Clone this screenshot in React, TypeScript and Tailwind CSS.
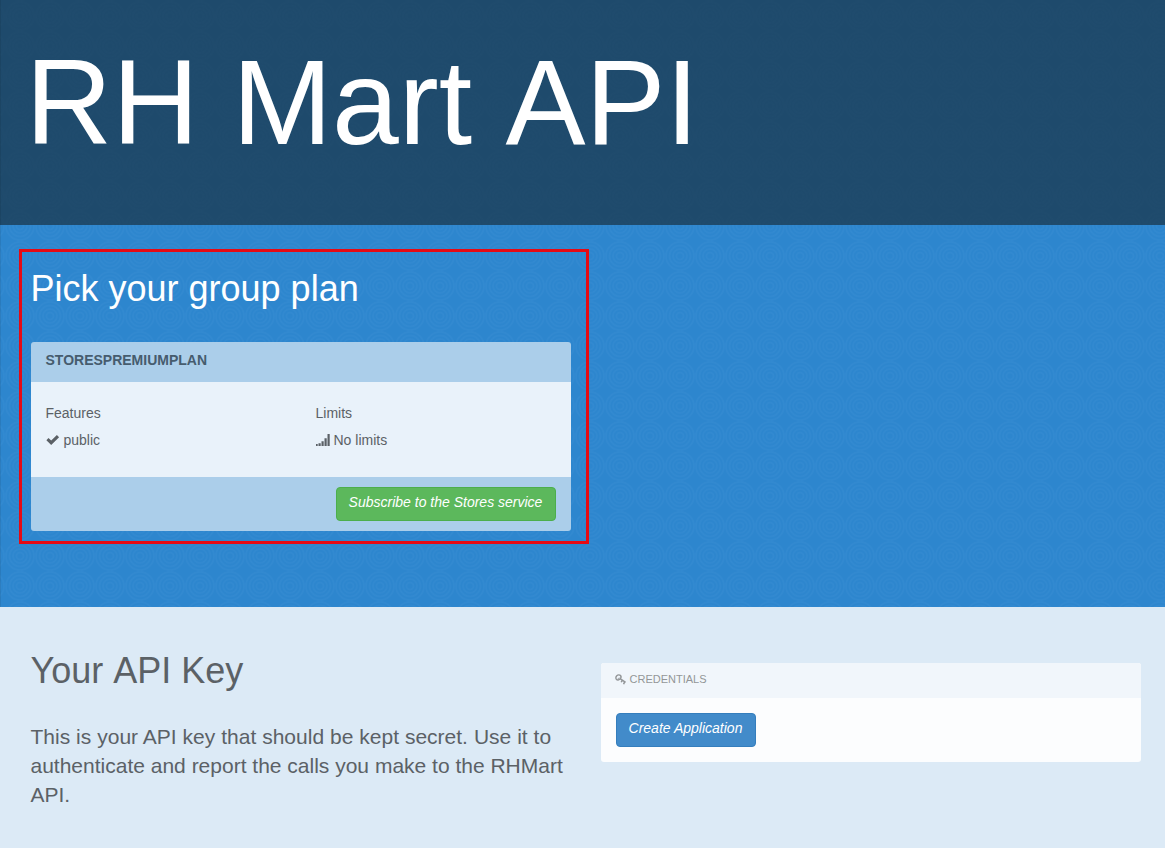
import React from 'react';

const RINGS = [14, 10.5, 7, 3.5];

function RingTexture({ id, color, opacity }: { id: string; color: string; opacity: number }) {
  return (
    <svg className="pointer-events-none absolute inset-0 h-full w-full" aria-hidden="true">
      <defs>
        <pattern id={id} x="5" y="1" width="30" height="30" patternUnits="userSpaceOnUse">
          {RINGS.map((r) => (
            <circle key={r} cx="15" cy="15" r={r} fill="none" stroke={color} strokeWidth="1.6" opacity={opacity} />
          ))}
        </pattern>
      </defs>
      <rect width="100%" height="100%" fill={`url(#${id})`} />
      <rect width="1" height="100%" fill="#000" opacity="0.08" />
    </svg>
  );
}

function CheckIcon() {
  return (
    <svg className="h-[14px] w-[14px]" viewBox="0 0 14 14" fill="currentColor">
      <path d="M.4 7.2 2.5 5.1 5.2 7.6 10.9 2.1 13.1 4.2 5.2 12Z" />
    </svg>
  );
}

function SignalIcon() {
  return (
    <svg className="h-[14px] w-[15px]" viewBox="0.5 0 15 14" fill="currentColor">
      <path d="M0 11h2.2v2H0zM3 10.2h2.2V13H3zM6 8.3h2.2V13H6zM9 5.3h2.2V13H9zM12 1h2.2v12H12z" />
    </svg>
  );
}

function KeyIcon() {
  return (
    <svg className="h-[11px] w-[11px] overflow-visible" viewBox="1 0 11 11" fill="none" stroke="currentColor">
      <path d="M1.5 5.5C.5 4.5.7 2.8 1.8 1.7 2.9.6 4.7.6 5.5 1.5 6.4 2.5 6 4 4.9 5.1 3.8 6.2 2.4 6.4 1.5 5.5Z" strokeWidth="1.4" />
      <path d="M5.1 4.7 10.6 8.4M7.2 6.2 6.2 8.3M9.6 7.9 8.6 10.2" strokeWidth="1.5" />
      <path d="M2.5 5.4 4.1 3.6" strokeWidth=".9" />
    </svg>
  );
}

export default function App() {
  return (
    <div className="flex h-[848px] w-full flex-col overflow-hidden font-['Liberation_Sans',Arial,sans-serif] text-[14px] leading-5 text-[#5b6166]">
      <header className="relative h-[225px] shrink-0 bg-[#1e4a6c] pt-[36px] pl-[25.5px]">
        <RingTexture id="rings-header" color="#285372" opacity={0.12} />
        <h1 className="relative text-[120px] leading-[132px] font-normal text-white [font-kerning:none]">RH Mart API</h1>
      </header>

      <section className="relative h-[382px] shrink-0 bg-[#2d86ce] pt-[44px] pl-[30.5px]">
        <div className="absolute inset-x-0 -top-[225px] bottom-0 [clip-path:inset(225px_0_0_0)]">
          <RingTexture id="rings-plan" color="#3c90d4" opacity={0.35} />
        </div>
        <h2 className="relative text-[36px] leading-10 text-white">Pick your group plan</h2>

        <div className="relative mt-[33px] w-[540px] overflow-hidden rounded-[3px]">
          <div className="h-10 bg-[#abceea] px-[15px] pt-2 font-bold text-[#465c6e]">STORESPREMIUMPLAN</div>
          <div className="grid h-[95px] grid-cols-2 bg-[#e9f2fa] pt-[21px] pl-[15px]">
            <div className="flex flex-col gap-[7px]">
              <div>Features</div>
              <div className="flex items-center gap-1"><CheckIcon />public</div>
            </div>
            <div className="flex flex-col gap-[7px] pl-[7.5px]">
              <div>Limits</div>
              <div className="flex items-center gap-[3px]"><SignalIcon />No limits</div>
            </div>
          </div>
          <div className="flex h-[54px] justify-end bg-[#abceea] pt-[10px] pr-[15px]">
            <button className="h-[34px] w-[220px] rounded-[4px] border border-[#4cae4c] bg-[#5cb85c] pb-[5px] text-white italic">
              Subscribe to the Stores service
            </button>
          </div>
        </div>

        <div className="pointer-events-none absolute top-[24px] left-[19px] h-[295px] w-[570px] border-[3px] border-[#e60a14]" />
      </section>

      <section className="flex flex-1 bg-[#dceaf6] pl-[30.5px]">
        <div className="w-[570px] pt-[44px]">
          <h2 className="text-[36px] leading-10">Your <span className="inline-block">API</span> Key</h2>
          <p className="mt-[31px] w-[540px] text-[21px] leading-[29px] first-line:[word-spacing:0.1px]">
            This is your API key that should be kept secret. Use it to authenticate and report the calls you make to the RHMart API.
          </p>
        </div>
        <div className="mt-[56px] h-[99px] w-[540px] overflow-hidden rounded-[3px] bg-[#fcfdfe]">
          <div className="flex h-[35px] items-center gap-[3px] bg-[#f1f6fb] pb-[3px] pl-[15px] text-[11px] text-[#939698]">
            <KeyIcon />CREDENTIALS
          </div>
          <div className="pt-[15px] pl-[15px]">
            <button className="h-[34px] w-[140px] rounded-[4px] border border-[#357ebd] bg-[#428bca] pb-[5px] text-white italic">
              Create Application
            </button>
          </div>
        </div>
      </section>
    </div>
  );
}
